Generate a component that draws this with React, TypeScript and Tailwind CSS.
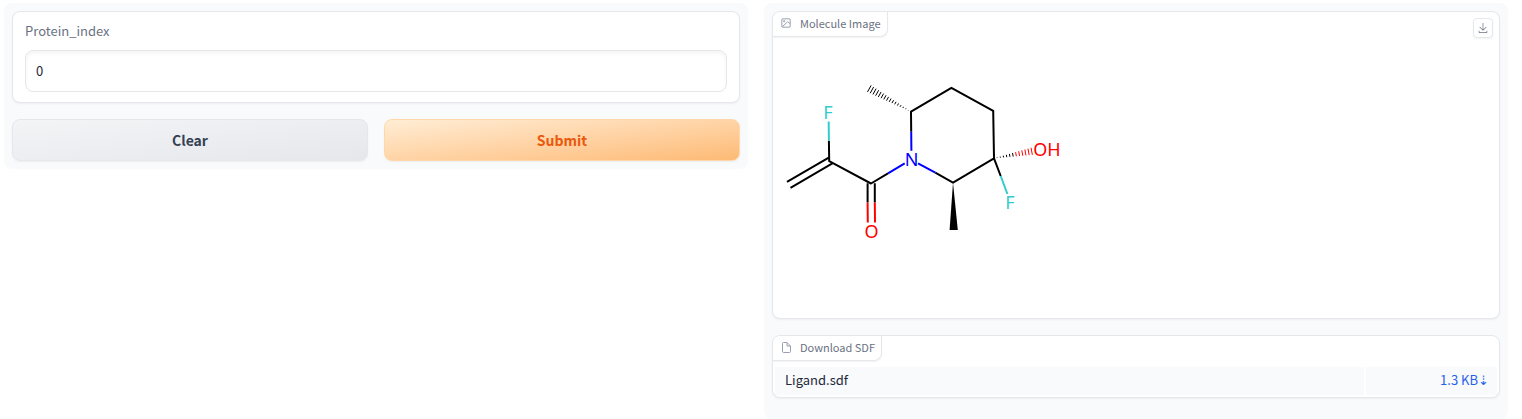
import { useState } from "react";

type Point = [number, number];

function hashes(from: Point, to: Point, count: number, halfWidth: number) {
  const dx = to[0] - from[0];
  const dy = to[1] - from[1];
  const length = Math.hypot(dx, dy);
  return Array.from({ length: count }, (_, i) => {
    const t = (i + 1) / count;
    const x = from[0] + dx * t;
    const y = from[1] + dy * t;
    const w = halfWidth * t;
    const nx = (-dy / length) * w;
    const ny = (dx / length) * w;
    return { x1: x - nx, y1: y - ny, x2: x + nx, y2: y + ny, t };
  });
}

function Molecule() {
  return (
    <svg
      role="img"
      aria-label="Molecule"
      width="300"
      height="300"
      viewBox="0 0 300 300"
      fill="none"
      strokeWidth="2"
      strokeLinecap="butt"
      strokeLinejoin="round"
    >
      <g stroke="#000">
        <path d="M14 169.8 56.2 145.4M17.5 175.8 59.8 151.2M55.9 128.7 56.2 149.2 98 171.5 115 161.3" />
        <path d="M94.6 171.3V190.5M101.8 171.3V190.5" />
        <path d="M138.2 119.7 138 99.7 178.4 75.8 220.2 98.8 221 146.3 180 170.7 162.3 160.7M221 146.3 227.7 164" />
      </g>
      <path stroke="#33cccc" d="M55.7 109.5 55.9 128.7M227.7 164 234.4 182" />
      <path stroke="#f00" d="M94.6 190.5 94.8 210.5M101.8 190.5 102 210.5" />
      <path stroke="#00f" d="M115 161.3 131.7 151.3M138.2 119.7 138.4 138.8M145 151.3 162.3 160.7" />
      <path fill="#000" d="M180 170.7 184.8 218H176.6Z" />
      <g strokeWidth="1">
        {hashes([138, 99.7], [96.3, 76.7], 16, 3.8).map(({ t, ...line }) => (
          <line key={t} {...line} stroke="#000" />
        ))}
        {hashes([221, 146.3], [258.7, 139.3], 12, 3.6).map(({ t, ...line }) => (
          <line key={t} {...line} stroke={t > 0.5 ? "#f00" : "#000"} />
        ))}
      </g>
      <g className="font-['Noto_Sans',sans-serif] text-[18px]" textAnchor="middle">
        <text x="55" y="107" fill="#33cccc">F</text>
        <text x="237" y="197" fill="#33cccc">F</text>
        <text x="138.5" y="154" fill="#00f">N</text>
        <text x="98.5" y="226" fill="#f00">O</text>
        <text x="274" y="144" fill="#f00">OH</text>
      </g>
    </svg>
  );
}

function ImageIcon() {
  return (
    <svg width="10" height="10" viewBox="0 0 24 24" fill="none" stroke="currentColor" strokeWidth="2.4" aria-hidden="true">
      <rect x="2" y="2" width="20" height="20" rx="1" />
      <circle cx="7.5" cy="7.5" r="1.6" />
      <path d="M22 14 16 9 3 21" />
    </svg>
  );
}

function FileIcon() {
  return (
    <svg width="9" height="11" viewBox="3 1 18 22" fill="none" stroke="currentColor" strokeWidth="2" strokeLinejoin="round" aria-hidden="true">
      <path d="M13 2H6a2 2 0 0 0-2 2v16a2 2 0 0 0 2 2h12a2 2 0 0 0 2-2V9z" />
      <path d="M13 2v7h7" />
    </svg>
  );
}

function DownloadIcon() {
  return (
    <svg width="10" height="10" viewBox="3 2 26 28" fill="currentColor" aria-hidden="true">
      <path d="M26 24v4H6v-4H4v4a2 2 0 0 0 2 2h20a2 2 0 0 0 2-2v-4zM26 14l-1.4-1.4L17 20.2V2h-2v18.2l-7.6-7.6L6 14l10 10z" />
    </svg>
  );
}

function BlockLabel({ icon, children }: { icon: React.ReactNode; children: React.ReactNode }) {
  return (
    <div className="flex h-[25px] w-fit items-center gap-2 rounded-br-lg border-r border-b border-gray-200 bg-white pr-[6px] pb-[2px] pl-[7px] text-[11px] text-gray-500 shadow-xs">
      <span className="flex w-3 justify-center text-gray-400">{icon}</span>
      {children}
    </div>
  );
}

const block = "rounded-lg border border-gray-200 bg-white shadow-xs";
const button = "h-[42px] rounded-lg border text-[14px] font-bold shadow-xs";

export default function App() {
  const [index, setIndex] = useState("0");
  return (
    <main className="flex items-start gap-4 pt-[3px] pr-[14px] pl-1 font-['Noto_Sans_CJK_SC',sans-serif] text-[13px] leading-5 text-gray-800">
      <section className="flex flex-1 flex-col gap-4 rounded-lg bg-gray-50 p-2">
        <div className={`${block} px-3 pt-[9px] pb-[10px]`}>
          <label htmlFor="protein-index" className="mb-[9px] block text-gray-500">
            Protein_index
          </label>
          <input
            id="protein-index"
            value={index}
            onChange={(e) => setIndex(e.target.value)}
            className="block h-[42px] w-full rounded-lg border border-gray-200 bg-white px-[10px] pb-[2px] shadow-[inset_0_2px_4px_0_rgba(0,0,0,0.05)]"
          />
        </div>
        <div className="grid grid-cols-2 gap-4">
          <button type="button" onClick={() => setIndex("")} className={`${button} border-gray-200 bg-linear-to-br from-gray-100 to-gray-200 text-gray-700`}>
            Clear
          </button>
          <button type="button" className={`${button} border-orange-200 bg-linear-to-br from-[#ffedd5] to-[#fdba74] text-[#ea580c]`}>
            Submit
          </button>
        </div>
      </section>

      <section className="flex flex-1 flex-col gap-4 rounded-lg bg-gray-50 px-2 pt-2 pb-[21px]">
        <div className={`${block} relative h-[308px] overflow-hidden`}>
          <div className="absolute top-0 left-0">
            <BlockLabel icon={<ImageIcon />}>Molecule Image</BlockLabel>
          </div>
          <button type="button" aria-label="Download" className="absolute top-[6px] right-[6px] flex size-5 items-center justify-center rounded-sm border border-gray-200 bg-white text-gray-500 shadow-xs">
            <DownloadIcon />
          </button>
          <Molecule />
        </div>
        <div className={`${block} overflow-hidden`}>
          <BlockLabel icon={<FileIcon />}>Download SDF</BlockLabel>
          <table className="mt-[5px] mb-[1px] w-full table-fixed border-separate border-spacing-x-[2px] border-spacing-y-[1px]">
            <tbody>
              <tr className="h-7">
                <td className="bg-gray-50 px-[10px] pb-[2px]">Ligand.sdf</td>
                <td className="w-[131px] bg-gray-50 px-2 pb-[2px] text-right text-[#2563eb]">
                  <a href="#ligand">1.3 KB&#8675;</a>
                </td>
              </tr>
            </tbody>
          </table>
        </div>
      </section>
    </main>
  );
}
